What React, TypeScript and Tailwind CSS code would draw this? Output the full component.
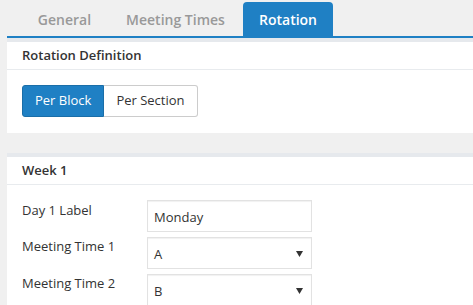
import React from "react";

const Arrow = () => (
  <svg width="7" height="7" viewBox="0 0 7 7" className="absolute right-[8px] top-[12px]">
    <path d="M0 1 H7 L3.5 7 Z" fill="#333" />
  </svg>
);

export default function App() {
  const font = { fontFamily: '"Open Sans", sans-serif' };
  return (
    <div className="w-[473px] h-[305px] bg-[#f0f0f0] overflow-hidden text-[#333]" style={font}>
      {/* Tabs */}
      <div className="ml-[7px] h-[38px] border-b-2 border-[#1f80c4] flex items-end pl-[14px] gap-[2px]">
        <div className="h-[34px] w-[87px] flex items-center justify-center text-[14px] font-semibold text-[#999]">General</div>
        <div className="h-[34px] w-[131px] flex items-center justify-center text-[14px] font-semibold text-[#999]">Meeting Times</div>
        <div className="h-[34px] w-[90px] flex items-center justify-center text-[14px] font-semibold text-white bg-[#1f80c4] rounded-t-[4px]">Rotation</div>
      </div>
      {/* Panel 1 */}
      <div className="ml-[7px] bg-white border-t-4 border-[#e6e9ed]">
        <div className="h-[28px] flex items-center px-[15px] text-[13px] font-semibold border-b border-[#e8ebee]">Rotation Definition</div>
        <div className="px-[15px] pt-[15px] pb-[16px] flex">
          <div className="flex h-[32px] text-[13px]">
            <div className="px-[12px] flex items-center bg-[#1f80c4] text-white border border-[#1a6ea8] rounded-l-[3px]">Per Block</div>
            <div className="px-[12px] flex items-center bg-white border border-l-0 border-[#ccc] rounded-r-[3px]">Per Section</div>
          </div>
        </div>
      </div>
      {/* Panel 2 */}
      <div className="ml-[7px] mt-[20px] bg-white border-t-4 border-[#e6e9ed]">
        <div className="h-[28px] flex items-center px-[15px] text-[13px] font-semibold border-b border-[#e8ebee]">Week 1</div>
        <div className="px-[15px] pt-[15px] flex flex-col gap-[5px] text-[13px]">
          <div className="flex">
            <div className="w-[125px] pt-[1px] leading-[18px]">Day 1 Label</div>
            <div className="w-[165px] h-[32px] border border-[#e2e2e2] shadow-[inset_0_1px_1px_rgba(0,0,0,0.06)] flex items-center pl-[6px] pt-[3px]">Monday</div>
          </div>
          <div className="flex">
            <div className="w-[125px] pt-[0px] leading-[18px]">Meeting Time 1</div>
            <div className="relative w-[165px] h-[32px] border border-[#e2e2e2] shadow-[inset_0_1px_1px_rgba(0,0,0,0.06)] flex items-center pl-[6px] pt-[3px]">A<Arrow /></div>
          </div>
          <div className="flex">
            <div className="w-[125px] pt-[0px] leading-[18px]">Meeting Time 2</div>
            <div className="relative w-[165px] h-[32px] border border-[#e2e2e2] shadow-[inset_0_1px_1px_rgba(0,0,0,0.06)] flex items-center pl-[6px] pt-[3px]">B<Arrow /></div>
          </div>
        </div>
      </div>
    </div>
  );
}
